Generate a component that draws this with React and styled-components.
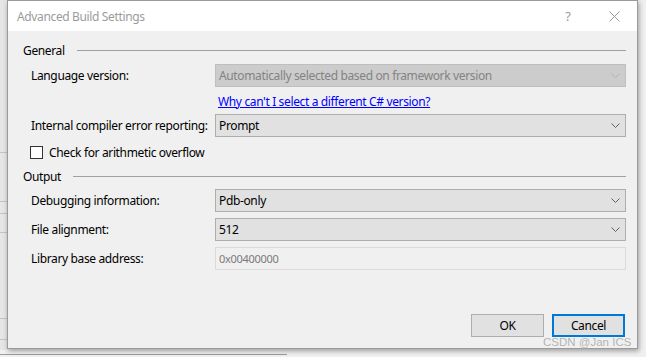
import React from 'react';
import styled, { createGlobalStyle } from 'styled-components';

const Global = createGlobalStyle`
  html, body { margin: 0; padding: 0; }
  body {
    width: 646px;
    height: 357px;
    overflow: hidden;
    background: #f0f0f0;
    font-family: "Segoe UI", "Noto Sans", sans-serif;
    font-size: 12px;
    letter-spacing: -0.36px;
    color: #000;
  }
`;

const Page = styled.div`
  position: relative;
  width: 646px;
  height: 357px;
  box-sizing: border-box;
  padding-left: 7px;
  background:
    linear-gradient(#9c9c9c, #9c9c9c) 0 354px / 287px 1px no-repeat,
    linear-gradient(#c4c4c4, #c4c4c4) 0 152px / 7px 1px no-repeat,
    linear-gradient(#c4c4c4, #c4c4c4) 0 201px / 7px 1px no-repeat,
    linear-gradient(#c4c4c4, #c4c4c4) 0 213px / 7px 1px no-repeat,
    linear-gradient(#c4c4c4, #c4c4c4) 0 232px / 7px 1px no-repeat,
    linear-gradient(#c4c4c4, #c4c4c4) 0 318px / 7px 1px no-repeat,
    linear-gradient(#c4c4c4, #c4c4c4) 0 339px / 7px 1px no-repeat,
    linear-gradient(#e6e6e6, #e6e6e6) 0 0 / 7px 350px no-repeat,
    #f0f0f0;
`;

const Dialog = styled.div`
  width: 631px;
  height: 349px;
  box-sizing: border-box;
  border: 1px solid #9a9a9a;
  display: flex;
  flex-direction: column;
  background: #f0f0f0;
  box-shadow: 1px 2px 5px rgba(0, 0, 0, 0.35);
`;

const TitleBar = styled.div`
  height: 30px;
  flex: none;
  background: #fff;
  display: flex;
  align-items: center;
  padding-left: 9px;
`;

const Title = styled.div`
  color: #9b9b9b;
  font-size: 12px;
  flex: 1;
`;

const CaptionButton = styled.div`
  width: ${p => p.$w}px;
  height: 30px;
  display: flex;
  align-items: center;
  justify-content: center;
  color: #9b9b9b;
  font-size: 13px;
`;

const Body = styled.div`
  flex: 1;
  display: flex;
  flex-direction: column;
  padding: 11px 11px 11px 15px;
`;

const SectionHeader = styled.div`
  height: 16px;
  display: flex;
  align-items: center;
  gap: 12px;
  margin-top: ${p => p.$mt || 0}px;
  &::after {
    content: "";
    flex: 1;
    height: 1px;
    background: #a0a0a0;
  }
`;

const FieldRow = styled.div`
  display: grid;
  grid-template-columns: 184px 1fr;
  align-items: center;
  margin-left: 8px;
  margin-top: ${p => p.$mt || 0}px;
`;

const Label = styled.div`
  white-space: nowrap;
`;

const Select = styled.div`
  height: 23px;
  box-sizing: border-box;
  border: 1px solid ${p => (p.$disabled ? '#bfbfbf' : '#adadad')};
  background: ${p => (p.$disabled ? '#cccccc' : '#e1e1e1')};
  color: ${p => (p.$disabled ? '#838383' : '#000')};
  display: flex;
  align-items: center;
  padding: 0 5px 0 3px;
  & > span { flex: 1; white-space: nowrap; }
`;

const TextBox = styled.div`
  height: 23px;
  box-sizing: border-box;
  border: 1px solid #dadada;
  background: #f0f0f0;
  color: #7a7a7a;
  display: flex;
  align-items: center;
  padding-left: 3px;
  font-size: 11px;
  letter-spacing: -0.3px;
`;

const LinkWrap = styled.div`
  grid-column: 2;
  padding-left: 3px;
  height: 16px;
  display: flex;
  align-items: center;
`;

const Link = styled.a`
  color: #0000ff;
  text-decoration: underline;
  cursor: pointer;
`;

const CheckRow = styled.label`
  display: flex;
  align-items: center;
  gap: 6px;
  margin-left: 7px;
  margin-top: ${p => p.$mt || 0}px;
  height: 13px;
`;

const CheckBox = styled.span`
  width: 13px;
  height: 13px;
  box-sizing: border-box;
  border: 1px solid #333;
  background: #fff;
  flex: none;
`;

const Footer = styled.div`
  margin-top: auto;
  display: flex;
  justify-content: flex-end;
  gap: 8px;
  padding-right: 1px;
`;

const Button = styled.div`
  width: 73px;
  height: 23px;
  box-sizing: border-box;
  border: ${p => (p.$default ? '2px solid #0078d7' : '1px solid #adadad')};
  background: #e1e1e1;
  display: flex;
  align-items: center;
  justify-content: center;
`;

const Watermark = styled.div`
  position: absolute;
  left: 543px;
  top: 334px;
  font-family: "Liberation Sans", Arial, sans-serif;
  font-size: 11.5px;
  letter-spacing: 0;
  line-height: 16px;
  color: #b0b0b0;
  text-shadow: 0 0 1px #fff;
  white-space: nowrap;
`;

const Chevron = ({ color }) => (
  <svg width="9" height="5" viewBox="0 0 9 5" style={{ flex: 'none' }}>
    <polyline points="0.5,0.5 4.5,4.5 8.5,0.5" fill="none" stroke={color} strokeWidth="1" />
  </svg>
);

const CloseIcon = () => (
  <svg width="11" height="11" viewBox="0 0 11 11">
    <path d="M0.5 0.5 L10.5 10.5 M10.5 0.5 L0.5 10.5" stroke="#9b9b9b" strokeWidth="1" fill="none" />
  </svg>
);

export default function App() {
  return (
    <Page>
      <Global />
      <Dialog>
        <TitleBar>
          <Title>Advanced Build Settings</Title>
          <CaptionButton $w={46}>?</CaptionButton>
          <CaptionButton $w={46}><CloseIcon /></CaptionButton>
        </TitleBar>
        <Body>
          <SectionHeader>General</SectionHeader>
          <FieldRow $mt={6}>
            <Label>Language version:</Label>
            <Select $disabled>
              <span>Automatically selected based on framework version</span>
              <Chevron color="#b3b3b3" />
            </Select>
          </FieldRow>
          <FieldRow $mt={6}>
            <LinkWrap>
              <Link>Why can't I select a different C# version?</Link>
            </LinkWrap>
          </FieldRow>
          <FieldRow $mt={5}>
            <Label>Internal compiler error reporting:</Label>
            <Select>
              <span>Prompt</span>
              <Chevron color="#606060" />
            </Select>
          </FieldRow>
          <CheckRow $mt={9}>
            <CheckBox />
            <span>Check for arithmetic overflow</span>
          </CheckRow>
          <SectionHeader $mt={9}>Output</SectionHeader>
          <FieldRow $mt={5}>
            <Label>Debugging information:</Label>
            <Select>
              <span>Pdb-only</span>
              <Chevron color="#606060" />
            </Select>
          </FieldRow>
          <FieldRow $mt={6}>
            <Label>File alignment:</Label>
            <Select>
              <span>512</span>
              <Chevron color="#606060" />
            </Select>
          </FieldRow>
          <FieldRow $mt={6}>
            <Label>Library base address:</Label>
            <TextBox>0x00400000</TextBox>
          </FieldRow>
          <Footer>
            <Button>OK</Button>
            <Button $default>Cancel</Button>
          </Footer>
        </Body>
      </Dialog>
      <Watermark>CSDN @Jan ICS</Watermark>
    </Page>
  );
}
